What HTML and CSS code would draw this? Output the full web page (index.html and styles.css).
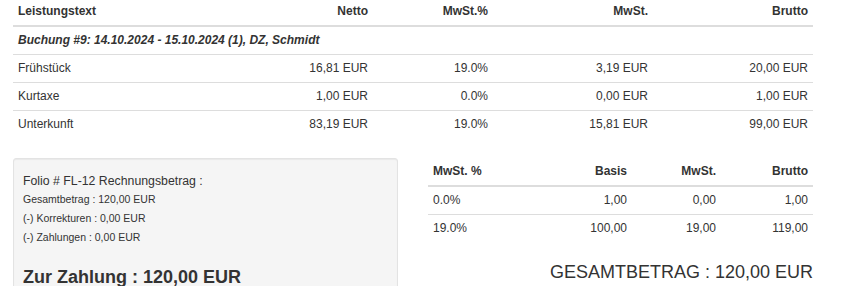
FILE: index.html
```html
<!DOCTYPE html>
<html lang="de">
<head>
<meta charset="utf-8">
<title>Rechnung</title>
<link rel="stylesheet" href="styles.css">
</head>
<body>
<div class="page">
  <table class="tbl main">
    <colgroup>
      <col class="c-text"><col class="c-netto"><col class="c-pct"><col class="c-mwst"><col class="c-brutto">
    </colgroup>
    <thead>
      <tr>
        <th>Leistungstext</th>
        <th class="r">Netto</th>
        <th class="r">MwSt.%</th>
        <th class="r">MwSt.</th>
        <th class="r">Brutto</th>
      </tr>
    </thead>
    <tbody>
      <tr class="group"><td colspan="5">Buchung #9: 14.10.2024 - 15.10.2024 (1), DZ, Schmidt</td></tr>
      <tr><td>Frühstück</td><td class="r">16,81 EUR</td><td class="r">19.0%</td><td class="r">3,19 EUR</td><td class="r">20,00 EUR</td></tr>
      <tr><td>Kurtaxe</td><td class="r">1,00 EUR</td><td class="r">0.0%</td><td class="r">0,00 EUR</td><td class="r">1,00 EUR</td></tr>
      <tr><td>Unterkunft</td><td class="r">83,19 EUR</td><td class="r">19.0%</td><td class="r">15,81 EUR</td><td class="r">99,00 EUR</td></tr>
    </tbody>
  </table>

  <div class="bottom">
    <div class="well">
      <div class="folio">Folio # FL-12 Rechnungsbetrag :</div>
      <div class="line">Gesamtbetrag : 120,00 EUR</div>
      <div class="line">(-) Korrekturen : 0,00 EUR</div>
      <div class="line">(-) Zahlungen : 0,00 EUR</div>
      <div class="due">Zur Zahlung : 120,00 EUR</div>
    </div>
    <div class="summary">
      <table class="tbl tax">
        <colgroup>
          <col class="t1"><col class="t2"><col class="t3"><col class="t4">
        </colgroup>
        <thead>
          <tr><th>MwSt. %</th><th class="r">Basis</th><th class="r">MwSt.</th><th class="r">Brutto</th></tr>
        </thead>
        <tbody>
          <tr><td>0.0%</td><td class="r">1,00</td><td class="r">0,00</td><td class="r">1,00</td></tr>
          <tr><td>19.0%</td><td class="r">100,00</td><td class="r">19,00</td><td class="r">119,00</td></tr>
        </tbody>
      </table>
      <div class="total">GESAMTBETRAG : 120,00 EUR</div>
    </div>
  </div>
</div>
</body>
</html>
```

FILE: styles.css
```css
html, body {
  margin: 0;
  padding: 0;
  background: #fff;
}
body {
  font-family: "Liberation Sans", Arial, Helvetica, sans-serif;
  font-size: 12px;
  line-height: 1.42857;
  color: #333;
}
.page {
  width: 800px;
  padding: 0 13px;
  margin-top: -2px;
}
.tbl {
  width: 100%;
  border-collapse: collapse;
  border-spacing: 0;
  margin-bottom: 20px;
  table-layout: fixed;
}
.tbl th,
.tbl td {
  padding: 5px;
  line-height: 17px;
  text-align: left;
  vertical-align: top;
}
.tbl th {
  font-weight: bold;
  border-bottom: 2px solid #ddd;
}
.tbl td {
  border-top: 1px solid #ddd;
}
.tbl tbody tr:first-child td {
  border-top: 0;
}
.tbl .r {
  text-align: right;
}
.c-text { width: 200px; }
.c-netto { width: 160px; }
.c-pct { width: 120px; }
.c-mwst { width: 160px; }
.c-brutto { width: 160px; }
.group td {
  font-weight: bold;
  font-style: italic;
}
.bottom {
  display: grid;
  grid-template-columns: 385px 385px;
  column-gap: 30px;
  align-items: start;
}
.well {
  background: #f5f5f5;
  border: 1px solid #e3e3e3;
  border-radius: 3px;
  box-shadow: inset 0 1px 1px rgba(0, 0, 0, 0.05);
  padding: 9px;
  min-height: 160px;
}
.folio {
  margin-top: 5px;
  font-size: 12.3px;
  line-height: 17px;
}
.line {
  font-size: 10.5px;
  line-height: 19px;
}
.due {
  margin-top: 20px;
  font-size: 18px;
  font-weight: bold;
  line-height: 20px;
}
.tax { margin-bottom: 20px; }
.t1 { width: 100px; }
.t2 { width: 104px; }
.t3 { width: 89px; }
.t4 { width: 92px; }
.total {
  text-align: right;
  font-size: 18px;
  line-height: 20px;
}
```
